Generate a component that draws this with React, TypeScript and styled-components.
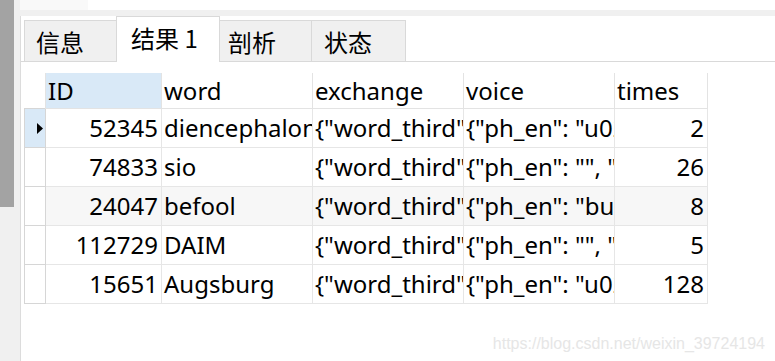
import React from 'react';
import styled, { createGlobalStyle } from 'styled-components';

const GlobalStyle = createGlobalStyle`
  html, body {
    margin: 0;
    padding: 0;
    height: 100%;
    background: #fff;
    overflow: hidden;
  }
  #root {
    height: 100%;
  }
`;

const Page = styled.div`
  display: flex;
  height: 100vh;
  position: relative;
  font-family: 'Noto Sans', 'Noto Sans CJK SC', sans-serif;
  color: #000;
`;

const ScrollTrack = styled.div`
  width: 14px;
  flex: 0 0 14px;
  background: #f0f0f0;
`;

const ScrollThumb = styled.div`
  height: 207px;
  background: #a3a3a3;
`;

const Gutter = styled.div`
  width: 6px;
  flex: 0 0 6px;
  background: #f0f0f0;
`;

const Main = styled.div`
  flex: 1;
  display: flex;
  flex-direction: column;
  min-width: 0;
`;

const TopStrip = styled.div`
  height: 10px;
  background: #fff;
  display: flex;
`;

const TopBlock = styled.div`
  width: 68px;
  background: #f9f9f9;
`;

const Band = styled.div`
  height: 6px;
  background: #f0f0f0;
`;

const Panel = styled.div`
  flex: 1;
  background: #fff;
  border-left: 1px solid #dcdcdc;
  display: flex;
  flex-direction: column;
`;

const TabBar = styled.div`
  display: flex;
  align-items: flex-end;
  height: 46px;
  box-sizing: border-box;
  padding-left: 3px;
  border-bottom: 1px solid #d9d9d9;
`;

const Tab = styled.div<{ $active?: boolean; $w: number; $pad: number }>`
  box-sizing: border-box;
  width: ${(p) => p.$w + 1}px;
  height: ${(p) => (p.$active ? 46 : 41)}px;
  margin-right: -1px;
  margin-bottom: ${(p) => (p.$active ? -1 : 0)}px;
  padding: 8px 0 0 ${(p) => p.$pad}px;
  border: 1px solid #d9d9d9;
  border-bottom: none;
  background: ${(p) => (p.$active ? '#fff' : '#f0f0f0')};
  position: relative;
  z-index: ${(p) => (p.$active ? 1 : 0)};
  font-family: 'Noto Sans CJK SC', 'Noto Sans', sans-serif;
  font-size: 24px;
  line-height: 26px;
  white-space: nowrap;
`;

const GridWrap = styled.div`
  padding: 11px 0 0 3px;
`;

const Grid = styled.table`
  border-collapse: collapse;
  table-layout: fixed;
  width: 683px;
  font-size: 24px;
`;

const HeadCell = styled.th<{ $selected?: boolean; $blank?: boolean }>`
  height: 35px;
  padding: 0 0 0 2px;
  font-weight: normal;
  text-align: left;
  background: ${(p) => (p.$selected ? '#d9e9f7' : '#fff')};
  border-left: ${(p) => (p.$blank ? 'none' : '1px solid #e3e3e3')};
  border-right: ${(p) => (p.$blank ? 'none' : '1px solid #e3e3e3')};
  border-bottom: ${(p) => (p.$blank ? 'none' : '1px solid #e3e3e3')};
  white-space: nowrap;
  overflow: hidden;
  line-height: 35px;
`;

const Row = styled.tr<{ $alt?: boolean }>`
  background: ${(p) => (p.$alt ? '#f7f7f7' : '#fff')};
`;

const Marker = styled.td<{ $current?: boolean }>`
  height: 38px;
  padding: 0;
  background: ${(p) => (p.$current ? '#d9e9f7' : '#fff')};
  border: 1px solid #d6d6d6;
  text-align: right;
  vertical-align: middle;
`;

const Cell = styled.td<{ $num?: boolean }>`
  height: 38px;
  padding: ${(p) => (p.$num ? '0 3px 0 0' : '0 0 0 2px')};
  text-align: ${(p) => (p.$num ? 'right' : 'left')};
  border: 1px solid #e6e6e6;
  white-space: nowrap;
  overflow: hidden;
  text-overflow: clip;
  line-height: 36px;
`;

const Arrow = styled.svg`
  display: block;
  margin: 0 2px 0 auto;
`;

const Watermark = styled.div`
  position: absolute;
  right: 10px;
  bottom: 8px;
  font-family: 'Liberation Sans', Arial, sans-serif;
  font-size: 16px;
  color: #e6e6e6;
  pointer-events: none;
`;

const rows = [
  { id: 52345, word: 'diencephalon', voice: '{"ph_en": "u02ccdai\u0259n\u02c8sef\u0259l\u0252n"}', times: 2 },
  { id: 74833, word: 'sio', voice: '{"ph_en": "", "ph_am": ""}', times: 26 },
  { id: 24047, word: 'befool', voice: '{"ph_en": "bu02c8fu02d0l"}', times: 8 },
  { id: 112729, word: 'DAIM', voice: '{"ph_en": "", "ph_am": ""}', times: 5 },
  { id: 15651, word: 'Augsburg', voice: '{"ph_en": "u02c8au0261zbu025cu02d0\u0261"}', times: 128 },
];

const tabs = [
  { label: '信息', w: 92, pad: 11 },
  { label: '结果 1', w: 103, pad: 14 },
  { label: '剖析', w: 92, pad: 8 },
  { label: '状态', w: 94, pad: 12 },
];

export default function App() {
  return (
    <Page>
      <GlobalStyle />
      <ScrollTrack>
        <ScrollThumb />
      </ScrollTrack>
      <Gutter />
      <Main>
        <TopStrip>
          <TopBlock />
        </TopStrip>
        <Band />
        <Panel>
          <TabBar>
            {tabs.map((t, i) => (
              <Tab key={t.label} $active={i === 1} $w={t.w} $pad={t.pad}>
                {t.label}
              </Tab>
            ))}
          </TabBar>
          <GridWrap>
            <Grid>
              <colgroup>
                <col style={{ width: 21 }} />
                <col style={{ width: 116 }} />
                <col style={{ width: 151 }} />
                <col style={{ width: 151 }} />
                <col style={{ width: 151 }} />
                <col style={{ width: 93 }} />
              </colgroup>
              <thead>
                <tr>
                  <HeadCell $blank />
                  <HeadCell $selected>ID</HeadCell>
                  <HeadCell>word</HeadCell>
                  <HeadCell>exchange</HeadCell>
                  <HeadCell>voice</HeadCell>
                  <HeadCell>times</HeadCell>
                </tr>
              </thead>
              <tbody>
                {rows.map((r, i) => (
                  <Row key={r.id} $alt={i === 2}>
                    <Marker $current={i === 0}>
                      {i === 0 && (
                        <Arrow width="6" height="11" viewBox="0 0 6 11">
                          <path d="M0 0 L6 5.5 L0 11 Z" fill="#000" />
                        </Arrow>
                      )}
                    </Marker>
                    <Cell $num>{r.id}</Cell>
                    <Cell>{r.word}</Cell>
                    <Cell>{'{"word_third": "", "word_done": ""}'}</Cell>
                    <Cell>{r.voice}</Cell>
                    <Cell $num>{r.times}</Cell>
                  </Row>
                ))}
              </tbody>
            </Grid>
          </GridWrap>
        </Panel>
      </Main>
      <Watermark>https://blog.csdn.net/weixin_39724194</Watermark>
    </Page>
  );
}
